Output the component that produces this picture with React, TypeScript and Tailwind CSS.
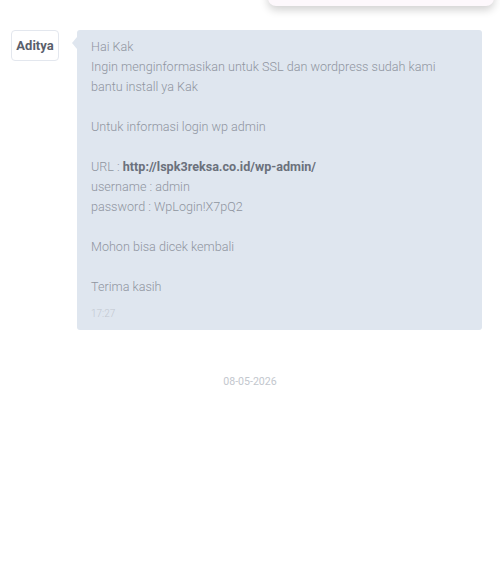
import React from 'react';

const lines: React.ReactNode[] = [
  'Hai Kak',
  'Ingin menginformasikan untuk SSL dan wordpress sudah kami bantu install ya Kak',
  '',
  'Untuk informasi login wp admin',
  '',
  <>URL : <strong className="font-bold text-[#6b717c]">http://lspk3reksa.co.id/wp-admin/</strong></>,
  'username : admin',
  'password : WpLogin!X7pQ2',
  '',
  'Mohon bisa dicek kembali',
  '',
  'Terima kasih',
];

export default function App() {
  return (
    <div className="relative w-full h-[580px] bg-white overflow-hidden" style={{ fontFamily: 'Roboto, "Noto Sans", sans-serif' }}>
      {/* dropdown peeking from above */}
      <div className="absolute left-[268px] right-[6px] top-[-40px] h-[46px] bg-[#fdf8fc] rounded-b-lg shadow-[0_4px_8px_rgba(0,0,0,0.18)]" />

      <div className="flex items-start gap-[18px] pt-[30px] pl-[11px] pr-[18px]">
        <div className="w-[48px] h-[31px] shrink-0 flex items-center justify-center border border-[#e3e7ee] rounded-[4px] bg-white text-[13px] font-bold text-[#5a606b]">
          Aditya
        </div>

        <div className="relative flex-1 bg-[#dfe6ef] rounded-[3px] pl-[14px] pr-[14px] pt-[7px] pb-[9px]">
          <div className="absolute left-[-5px] top-[7px] w-0 h-0 border-y-[6px] border-y-transparent border-r-[5px] border-r-[#dfe6ef]" />
          <div className="text-[12.6px] leading-[20px] font-light text-[#8f959f]">
            {lines.map((l, i) => (
              <div key={i} className="min-h-[20px]">{l}</div>
            ))}
          </div>
          <div className="mt-[10px] text-[10px] leading-[14px] font-light text-[#c2c7cf]">17:27</div>
        </div>
      </div>

      <div className="mt-[45px] text-center text-[10.6px] leading-[14px] text-[#c3c7ce]">08-05-2026</div>
    </div>
  );
}
